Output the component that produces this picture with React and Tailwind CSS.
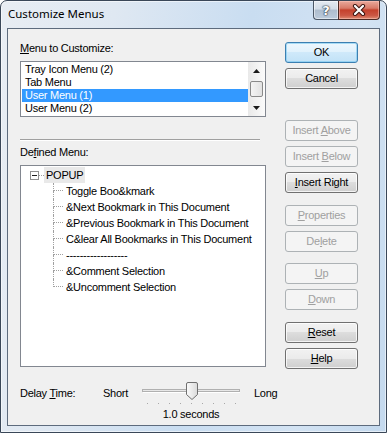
import React from "react";

const FONT = { fontFamily: '"Liberation Sans", Arial, sans-serif' };

function U({ children }) {
  return <span className="underline underline-offset-[1px] decoration-[1px]">{children}</span>;
}

function Btn({ children, disabled, def, className = "" }) {
  let look =
    "border-[#707070] text-black bg-[linear-gradient(to_bottom,#f2f2f2_0%,#ebebeb_50%,#dddddd_50%,#cfcfcf_100%)] shadow-[inset_0_0_0_1px_rgba(255,255,255,0.75)]";
  if (def)
    look =
      "border-[#3c7fb1] text-black bg-[linear-gradient(to_bottom,#eef7fd_0%,#e0f1fc_50%,#cfe9fa_50%,#c2e2f7_100%)] shadow-[inset_0_0_0_1px_rgba(120,200,240,0.6)]";
  if (disabled) look = "border-[#adb2b5] text-[#a0a0a0] bg-[#f4f4f4]";
  return (
    <div
      className={`flex h-[21px] w-[73px] items-center justify-center rounded-[3px] border text-[11px] leading-[13px] ${look} ${className}`}
    >
      <span className="whitespace-pre">{children}</span>
    </div>
  );
}

function TreeChild({ text, last }) {
  return (
    <div className="flex h-[16px]">
      <div className="flex w-[10px] flex-col">
        <div className="h-[8px] border-l border-b border-dotted border-[#a0a0a0]" />
        <div className={`h-[8px] ${last ? "" : "border-l border-dotted border-[#a0a0a0]"}`} />
      </div>
      <div className="pl-[3px] text-[11px] leading-[16px] whitespace-nowrap text-black">{text}</div>
    </div>
  );
}

export default function App() {
  const children = [
    "Toggle Boo&kmark",
    "&Next Bookmark in This Document",
    "&Previous Bookmark in This Document",
    "C&lear All Bookmarks in This Document",
    "------------------",
    "&Comment Selection",
    "&Uncomment Selection",
  ];
  return (
    <div className="h-[433px] w-[387px] overflow-hidden bg-white" style={FONT}>
      <div className="flex h-[433px] w-[387px] flex-col rounded-t-[7px] border border-[#3a4758] bg-[linear-gradient(100deg,#e8edf3_0%,#dfe8f2_25%,#c9ddf1_55%,#d3e3f3_80%,#c4d9ee_100%)] shadow-[inset_0_0_0_1px_rgba(255,255,255,0.55)]">
        {/* Title bar */}
        <div className="flex h-[27px] pl-[7px] pr-[6px]">
          <div
            className="mt-[5px] text-[11.5px] leading-[16px] text-black"
            style={{ fontFamily: '"Noto Sans", "Open Sans", sans-serif' }}
          >
            Customize Menus
          </div>
          <div className="ml-auto flex h-[19px]">
            <div className="flex w-[25px] items-center justify-center rounded-bl-[4px] border border-t-0 border-r-0 border-[#4c5866] bg-[linear-gradient(to_bottom,#e4eaf1_0%,#d3dde8_45%,#aebdcd_50%,#bccbdb_100%)] shadow-[inset_0_0_0_1px_rgba(255,255,255,0.5)]">
              <span
                className="text-[13px] font-bold leading-none text-white [text-shadow:0_0_1px_#2b3440,0_0_1px_#2b3440,0_0_2px_#2b3440]"
                style={{ fontFamily: '"DejaVu Sans", sans-serif' }}
              >
                ?
              </span>
            </div>
            <div className="flex w-[42px] items-center justify-center rounded-br-[4px] border border-t-0 border-[#4c2a24] bg-[linear-gradient(to_bottom,#e9a99c_0%,#d87a68_40%,#c4412c_50%,#cb5744_80%,#dd8c72_100%)] shadow-[inset_0_0_0_1px_rgba(255,200,190,0.5)]">
              <svg width="14" height="12" viewBox="0 0 14 12">
                <path d="M3 2 L11 10 M11 2 L3 10" stroke="#3d1510" strokeWidth="4.2" strokeLinecap="round" />
                <path d="M3 2 L11 10 M11 2 L3 10" stroke="#ffffff" strokeWidth="2.2" strokeLinecap="round" />
              </svg>
            </div>
          </div>
        </div>

        {/* Client area */}
        <div className="mx-[6px] mb-[6px] flex flex-1 flex-col border border-[#5d6b7d] bg-[#f0f0f0] pl-[12px] pt-[13px] text-[11px] tracking-[-0.25px] text-black">
          <div className="flex">
            {/* Left column */}
            <div className="flex w-[246px] flex-col">
              <div className="h-[13px] leading-[13px]">
                <U>M</U>enu to Customize:
              </div>
              <div className="mt-[6px] flex h-[56px] border border-[#828790] bg-white">
                <div className="flex flex-1 flex-col pl-[1px] pt-[1px]">
                  <div className="h-[13px] px-[3px] leading-[13px]">Tray Icon Menu (2)</div>
                  <div className="h-[13px] px-[3px] leading-[13px]">Tab Menu</div>
                  <div className="h-[13px] bg-[#3399ff] px-[3px] leading-[13px] text-white">User Menu (1)</div>
                  <div className="h-[13px] px-[3px] leading-[13px]">User Menu (2)</div>
                </div>
                <div className="flex w-[17px] flex-col bg-[linear-gradient(to_right,#e9e9e9,#fbfbfb)]">
                  <div className="flex h-[17px] items-center justify-center">
                    <svg width="7" height="4" viewBox="0 0 7 4">
                      <path d="M3.5 0 L7 4 L0 4 Z" fill="#1a1a1a" />
                    </svg>
                  </div>
                  <div className="mx-[2px] mt-[2px] h-[16px] rounded-[2px] border border-[#8a8a8a] bg-[linear-gradient(to_right,#f4f4f4,#e2e2e2)]" />
                  <div className="flex flex-1 items-end justify-center pb-[6px]">
                    <svg width="7" height="4" viewBox="0 0 7 4">
                      <path d="M0 0 L7 0 L3.5 4 Z" fill="#1a1a1a" />
                    </svg>
                  </div>
                </div>
              </div>
              <div className="mt-[22px] w-[240px] border-t border-b border-t-[#a0a0a0] border-b-white" />
              <div className="mt-[5px] h-[13px] leading-[13px]">
                De<U>f</U>ined Menu:
              </div>
              <div className="mt-[6px] h-[202px] border border-[#828790] bg-white pt-[1px]">
                <div className="flex h-[16px] items-center pl-[9px]">
                  <div className="flex h-[9px] w-[9px] items-center justify-center border border-[#919191] bg-white">
                    <div className="h-[1px] w-[5px] bg-[#1e1e1e]" />
                  </div>
                  <div className="h-[1px] w-[5px] border-t border-dotted border-[#a0a0a0]" />
                  <div className="h-[16px] bg-[#e9e9e9] px-[2px] leading-[16px]">POPUP</div>
                </div>
                <div className="ml-[32px] flex flex-col">
                  {children.map((t, i) => (
                    <TreeChild key={i} text={t} last={i === children.length - 1} />
                  ))}
                </div>
              </div>
            </div>

            {/* Right column: buttons */}
            <div className="ml-[19px] flex w-[73px] flex-col">
              <Btn def>OK</Btn>
              <Btn className="mt-[5px]">Cancel</Btn>
              <Btn disabled className="mt-[31px]">
                Insert <U>A</U>bove
              </Btn>
              <Btn disabled className="mt-[5px]">
                Insert <U>B</U>elow
              </Btn>
              <Btn className="mt-[5px]">
                <U>I</U>nsert Right
              </Btn>
              <Btn disabled className="mt-[12px]">
                <U>P</U>roperties
              </Btn>
              <Btn disabled className="mt-[5px]">
                De<U>l</U>ete
              </Btn>
              <Btn disabled className="mt-[11px]">
                <U>U</U>p
              </Btn>
              <Btn disabled className="mt-[5px]">
                <U>D</U>own
              </Btn>
              <Btn className="mt-[12px]">
                <U>R</U>eset
              </Btn>
              <Btn className="mt-[5px]">
                <U>H</U>elp
              </Btn>
            </div>
          </div>

          {/* Delay time row */}
          <div className="mt-[12px] flex h-[24px] items-center">
            <div className="w-[83px] leading-[13px]">
              Delay <U>T</U>ime:
            </div>
            <div className="w-[37px] leading-[13px]">Short</div>
            <svg width="102" height="24" viewBox="0 0 102 24">
              <rect x="2.5" y="8.5" width="97" height="2" fill="#e7e7e7" stroke="#b0b0b0" />
              <line x1="3" y1="11.5" x2="100" y2="11.5" stroke="#ffffff" />
              {[7, 18, 29, 40, 51, 62, 73, 84, 95].map((x) => (
                <rect key={x} x={x} y="22" width="1" height="1" fill="#a8a8a8" />
              ))}
              <defs>
                <linearGradient id="thumbg" x1="0" y1="0" x2="1" y2="0">
                  <stop offset="0" stopColor="#fbfbfb" />
                  <stop offset="1" stopColor="#dadada" />
                </linearGradient>
              </defs>
              <path
                d="M46.5 3 Q46.5 1.5 48 1.5 L56 1.5 Q57.5 1.5 57.5 3 L57.5 13.5 L52 18.5 L46.5 13.5 Z"
                fill="url(#thumbg)"
                stroke="#6f6f6f"
              />
            </svg>
            <div className="ml-[12px] leading-[13px]">Long</div>
          </div>
          <div className="ml-[120px] mt-[3px] w-[102px] text-center leading-[13px]">1.0 seconds</div>
        </div>
      </div>
    </div>
  );
}
